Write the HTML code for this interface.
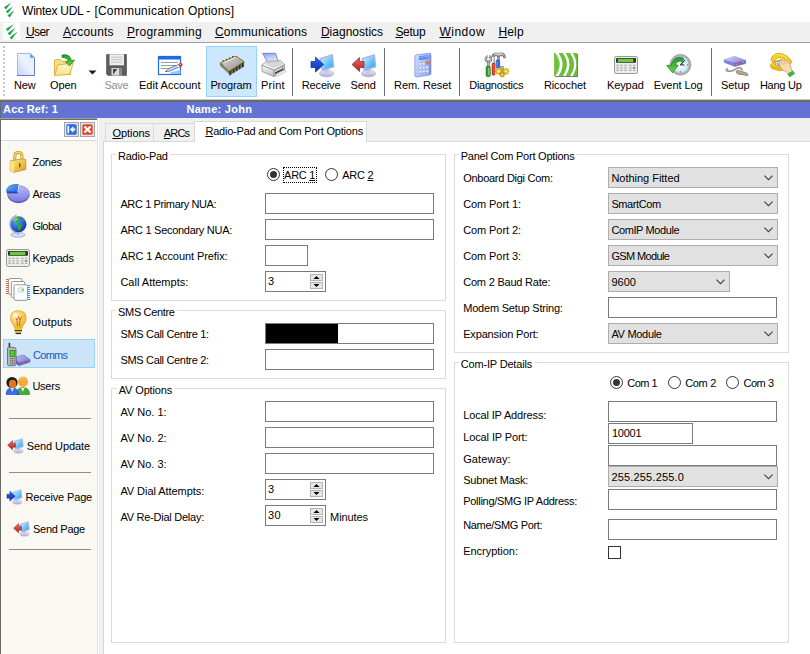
<!DOCTYPE html>
<html>
<head>
<meta charset="utf-8">
<title>Wintex UDL - [Communication Options]</title>
<style>
html,body{margin:0;padding:0;}
body{width:810px;height:654px;overflow:hidden;background:#f0f0f0;position:relative;font-family:"Liberation Sans",sans-serif;font-size:11px;color:#000;}
.abs,.t,.in,.sel,.gb{position:absolute;}
.t{white-space:nowrap;line-height:13px;height:13px;font-size:11px;}
.t12{font-size:12px;line-height:15px;height:15px;}
.t u{text-decoration:underline;text-underline-offset:1px;text-decoration-thickness:1px;}
.b{font-weight:bold;color:#fff;}
#title{left:0;top:0;width:810px;height:22px;background:#fff;}
#menu{left:0;top:22px;width:810px;height:20px;background:#f0f0f0;}
#tbar{left:0;top:42px;width:810px;height:57px;background:#fff;border-top:1px solid #a0a0a0;box-sizing:border-box;}
.sep{position:absolute;top:48px;width:1px;height:48px;background:#707070;}
#bluebar{left:0;top:102px;width:810px;height:16px;background:#6273d4;border-left:1px solid #6a6a6a;box-sizing:border-box;}
#side{left:0;top:119px;width:97px;height:535px;background:#f9f8f3;border-left:1px solid #6a6a6a;border-top:1px solid #6a6a6a;box-sizing:border-box;}
#sidehead{left:0;top:0;width:96px;height:20px;background:#fff;border-bottom:1px solid #d9d9d9;}
.hr{position:absolute;left:8px;width:82px;height:1px;background:#8c8c8c;}
#panel{left:103px;top:141px;width:707px;height:513px;background:#fff;border-left:1px solid #d9d9d9;border-top:1px solid #d9d9d9;box-sizing:border-box;}
.tab{position:absolute;box-sizing:border-box;border:1px solid #d9d9d9;border-bottom:none;background:#f0f0f0;}
.gb{border:1px solid #dcdcdc;box-sizing:border-box;}
.glb{position:absolute;background:#fff;height:3px;}
.in{box-sizing:border-box;border:1px solid #7a7a7a;background:#fff;}
.sel{box-sizing:border-box;border:1px solid #adadad;background:#e1e1e1;}
.sel svg{position:absolute;right:4px;top:7px;}
.radio{position:absolute;width:13px;height:13px;box-sizing:border-box;border:1px solid #333;border-radius:50%;background:#fff;}
.radio.on::after{content:"";position:absolute;left:2px;top:2px;width:7px;height:7px;border-radius:50%;background:#333;}
</style>
</head>
<body>
<div id="title" class="abs"></div><div id="menu" class="abs"></div>
<div id="tbar" class="abs"></div>
<div class="abs" style="left:206px;top:46px;width:51px;height:51px;background:#cce8ff;border:1px solid #99d1ff;box-sizing:border-box"></div>
<div class="sep" style="left:292px"></div>
<div class="sep" style="left:384px"></div>
<div class="sep" style="left:459px"></div>
<div class="sep" style="left:711px"></div>
<div class="abs" style="left:0;top:99px;width:810px;height:1px;background:#c8c8c8"></div><div class="abs" style="left:0;top:100px;width:810px;height:2px;background:#6a6a6a"></div>
<div id="bluebar" class="abs"></div>
<div class="abs" style="left:0;top:118px;width:97px;height:1px;background:#a0a0a0"></div><div class="abs" style="left:97px;top:118px;width:1px;height:536px;background:#e3e3e3"></div><div class="abs" style="left:98px;top:118px;width:1px;height:536px;background:#fff"></div>
<div id="side" class="abs"><div id="sidehead" class="abs"></div><div class="abs" style="left:2px;top:219px;width:92px;height:29px;box-sizing:border-box;background:#cce4f7;border:1px solid #99d1ff"></div><div class="hr" style="top:298px"></div><div class="hr" style="top:352px"></div><div class="hr" style="top:429px"></div></div>
<div id="panel" class="abs"></div>
<div class="tab" style="left:105px;top:123px;width:49px;height:18px"></div>
<div class="tab" style="left:153px;top:123px;width:42px;height:18px"></div>
<div class="tab" style="left:194px;top:121px;width:173px;height:21px;background:#fff"></div>
<div class="gb" style="left:111px;top:154px;width:335px;height:147px"></div><div class="glb" style="left:116px;top:153px;width:54px"></div>
<div class="gb" style="left:111px;top:310px;width:335px;height:69px"></div><div class="glb" style="left:116px;top:309px;width:61px"></div>
<div class="gb" style="left:111px;top:388px;width:335px;height:255px"></div><div class="glb" style="left:117px;top:387px;width:58px"></div>
<div class="gb" style="left:454px;top:154px;width:335px;height:199px"></div><div class="glb" style="left:459px;top:153px;width:118px"></div>
<div class="gb" style="left:454px;top:362px;width:335px;height:281px"></div><div class="glb" style="left:459px;top:361px;width:76px"></div>
<div class="radio on" style="left:267px;top:168px"></div>
<div class="radio" style="left:325px;top:168px"></div>
<div class="abs" style="left:283px;top:167px;width:34px;height:16px;box-sizing:border-box;border:1px dotted #000"></div>
<div class="in" style="left:265px;top:193px;width:169px;height:21px"></div>
<div class="in" style="left:265px;top:219px;width:169px;height:21px"></div>
<div class="in" style="left:265px;top:245px;width:43px;height:21px"></div>
<div class="in" style="left:265px;top:271px;width:61px;height:21px"></div>
<svg class="abs" style="left:310px;top:274px" width="13" height="15" viewBox="0 0 13 15"><rect x="0.5" y="0.5" width="12" height="6" fill="#e6e6e6" stroke="#b4b4b4"/><rect x="0.5" y="8.5" width="12" height="6" fill="#e6e6e6" stroke="#b4b4b4"/><path d="M3.5 5 L6.5 2 L9.5 5 Z" fill="#000"/><path d="M3.5 10 L6.5 13 L9.5 10 Z" fill="#000"/></svg>
<div class="in" style="left:265px;top:323px;width:169px;height:21px"></div>
<div class="abs" style="left:266px;top:324px;width:72px;height:19px;background:#000"></div>
<div class="in" style="left:265px;top:349px;width:169px;height:21px"></div>
<div class="in" style="left:265px;top:401px;width:169px;height:21px"></div>
<div class="in" style="left:265px;top:427px;width:169px;height:21px"></div>
<div class="in" style="left:265px;top:453px;width:169px;height:21px"></div>
<div class="in" style="left:265px;top:479px;width:61px;height:21px"></div>
<svg class="abs" style="left:310px;top:482px" width="13" height="15" viewBox="0 0 13 15"><rect x="0.5" y="0.5" width="12" height="6" fill="#e6e6e6" stroke="#b4b4b4"/><rect x="0.5" y="8.5" width="12" height="6" fill="#e6e6e6" stroke="#b4b4b4"/><path d="M3.5 5 L6.5 2 L9.5 5 Z" fill="#000"/><path d="M3.5 10 L6.5 13 L9.5 10 Z" fill="#000"/></svg>
<div class="in" style="left:265px;top:505px;width:61px;height:21px"></div>
<svg class="abs" style="left:310px;top:508px" width="13" height="15" viewBox="0 0 13 15"><rect x="0.5" y="0.5" width="12" height="6" fill="#e6e6e6" stroke="#b4b4b4"/><rect x="0.5" y="8.5" width="12" height="6" fill="#e6e6e6" stroke="#b4b4b4"/><path d="M3.5 5 L6.5 2 L9.5 5 Z" fill="#000"/><path d="M3.5 10 L6.5 13 L9.5 10 Z" fill="#000"/></svg>
<div class="sel" style="left:608px;top:167px;width:170px;height:21px"><svg width="9" height="6" viewBox="0 0 9 6"><path d="M0.4 0.6 L4.5 4.7 L8.6 0.6" fill="none" stroke="#404040" stroke-width="1.1"/></svg></div>
<div class="sel" style="left:608px;top:193px;width:170px;height:21px"><svg width="9" height="6" viewBox="0 0 9 6"><path d="M0.4 0.6 L4.5 4.7 L8.6 0.6" fill="none" stroke="#404040" stroke-width="1.1"/></svg></div>
<div class="sel" style="left:608px;top:219px;width:170px;height:21px"><svg width="9" height="6" viewBox="0 0 9 6"><path d="M0.4 0.6 L4.5 4.7 L8.6 0.6" fill="none" stroke="#404040" stroke-width="1.1"/></svg></div>
<div class="sel" style="left:608px;top:245px;width:170px;height:21px"><svg width="9" height="6" viewBox="0 0 9 6"><path d="M0.4 0.6 L4.5 4.7 L8.6 0.6" fill="none" stroke="#404040" stroke-width="1.1"/></svg></div>
<div class="sel" style="left:608px;top:323px;width:170px;height:21px"><svg width="9" height="6" viewBox="0 0 9 6"><path d="M0.4 0.6 L4.5 4.7 L8.6 0.6" fill="none" stroke="#404040" stroke-width="1.1"/></svg></div>
<div class="sel" style="left:608px;top:271px;width:122px;height:21px"><svg width="9" height="6" viewBox="0 0 9 6"><path d="M0.4 0.6 L4.5 4.7 L8.6 0.6" fill="none" stroke="#404040" stroke-width="1.1"/></svg></div>
<div class="in" style="left:608px;top:297px;width:169px;height:21px"></div>
<div class="radio on" style="left:610px;top:376px"></div>
<div class="radio" style="left:668px;top:376px"></div>
<div class="radio" style="left:726px;top:376px"></div>
<div class="in" style="left:608px;top:401px;width:169px;height:21px"></div>
<div class="in" style="left:608px;top:423px;width:85px;height:21px"></div>
<div class="in" style="left:608px;top:445px;width:169px;height:21px"></div>
<div class="sel" style="left:608px;top:466px;width:170px;height:21px"><svg width="9" height="6" viewBox="0 0 9 6"><path d="M0.4 0.6 L4.5 4.7 L8.6 0.6" fill="none" stroke="#404040" stroke-width="1.1"/></svg></div>
<div class="in" style="left:608px;top:489px;width:169px;height:21px"></div>
<div class="in" style="left:608px;top:519px;width:169px;height:21px"></div>
<div class="abs" style="left:608px;top:546px;width:13px;height:13px;box-sizing:border-box;border:1px solid #333;background:#fff"></div>
<svg width="0" height="0" style="position:absolute"><defs>
<linearGradient id="gPage" x1="0" y1="1" x2="1" y2="0"><stop offset="0" stop-color="#c4d4fa"/><stop offset="0.55" stop-color="#eef2fe"/><stop offset="1" stop-color="#dfe9ff"/></linearGradient>
<linearGradient id="gFold" x1="0" y1="0" x2="0" y2="1"><stop offset="0" stop-color="#fff8d0"/><stop offset="1" stop-color="#f9e089"/></linearGradient>
<linearGradient id="gGreen" x1="0" y1="0" x2="0" y2="1"><stop offset="0" stop-color="#1f9a2a"/><stop offset="1" stop-color="#6fd44a"/></linearGradient>
<linearGradient id="gScreen" x1="0" y1="0" x2="1" y2="1"><stop offset="0" stop-color="#d6f1ff"/><stop offset="0.5" stop-color="#6fc8fb"/><stop offset="1" stop-color="#2f9df0"/></linearGradient>
<linearGradient id="gBlueArr" x1="0" y1="0" x2="0" y2="1"><stop offset="0" stop-color="#2a6cf0"/><stop offset="1" stop-color="#0a2fb0"/></linearGradient>
<linearGradient id="gRedArr" x1="0" y1="0" x2="0" y2="1"><stop offset="0" stop-color="#e8706a"/><stop offset="1" stop-color="#b02020"/></linearGradient>
<linearGradient id="gStand" x1="0" y1="0" x2="0" y2="1"><stop offset="0" stop-color="#f2f2fb"/><stop offset="1" stop-color="#a9a9d6"/></linearGradient>
<linearGradient id="gCalc" x1="0" y1="0" x2="1" y2="0.6"><stop offset="0" stop-color="#d4e0fd"/><stop offset="0.5" stop-color="#b4c6f7"/><stop offset="1" stop-color="#94acf0"/></linearGradient>
<linearGradient id="gChip" x1="0" y1="0" x2="1" y2="1"><stop offset="0" stop-color="#d6d6d6"/><stop offset="1" stop-color="#909090"/></linearGradient>
<linearGradient id="gPrn" x1="0" y1="0" x2="0" y2="1"><stop offset="0" stop-color="#fafafa"/><stop offset="1" stop-color="#bdbdbd"/></linearGradient>
<linearGradient id="gPaper" x1="0" y1="0" x2="1" y2="1"><stop offset="0" stop-color="#8fa8f5"/><stop offset="1" stop-color="#e8eeff"/></linearGradient>
<linearGradient id="gPaper2" x1="0" y1="0" x2="0.3" y2="1"><stop offset="0" stop-color="#8a9fee"/><stop offset="0.6" stop-color="#c9d6fb"/><stop offset="1" stop-color="#eef2ff"/></linearGradient>
<linearGradient id="gModemTop" x1="0" y1="0" x2="1" y2="0.4"><stop offset="0" stop-color="#e4e4fc"/><stop offset="0.5" stop-color="#b4b4f2"/><stop offset="1" stop-color="#8c8ce2"/></linearGradient>
<linearGradient id="gModem" x1="0" y1="0" x2="1" y2="1"><stop offset="0" stop-color="#b9b9f6"/><stop offset="1" stop-color="#6f6fd6"/></linearGradient>
<radialGradient id="gClock" cx="0.5" cy="0.5" r="0.5"><stop offset="0" stop-color="#ffffff"/><stop offset="1" stop-color="#bfe6f7"/></radialGradient>
<radialGradient id="gGlobe" cx="0.35" cy="0.3" r="0.8"><stop offset="0" stop-color="#5aa8ff"/><stop offset="1" stop-color="#0a2a9a"/></radialGradient>
<radialGradient id="gBulb" cx="0.4" cy="0.35" r="0.7"><stop offset="0" stop-color="#fff6b0"/><stop offset="1" stop-color="#f0a818"/></radialGradient>
<linearGradient id="gLock" x1="0" y1="0" x2="1" y2="1"><stop offset="0" stop-color="#ffe98a"/><stop offset="1" stop-color="#d9a11a"/></linearGradient>
<linearGradient id="gPie" x1="0" y1="0" x2="0" y2="1"><stop offset="0" stop-color="#b8b8f8"/><stop offset="1" stop-color="#7d7de0"/></linearGradient>
<linearGradient id="gPie2" x1="0" y1="0" x2="1" y2="1"><stop offset="0" stop-color="#6fb4ff"/><stop offset="1" stop-color="#1e62d6"/></linearGradient>
</defs></svg>
<svg class="abs" style="left:0px;top:0px" width="22" height="22" viewBox="0 0 22 22"><path d="M6.0 9.4 L11.2 2.6 L4.0 7.2 Z" fill="#1fa64a"/><path d="M7.8 13.5 L12.8 6.6 L5.8 11.3 Z" fill="#1fa64a"/><path d="M9.7 17.6 L14.2 10.3 L7.5 15.6 Z" fill="#1fa64a"/></svg>
<div class="abs" style="left:3px;top:23px;width:17px;height:17px;background:#fff"></div>
<svg class="abs" style="left:0px;top:22px" width="22" height="20" viewBox="0 0 22 20"><path d="M7.8 9.3 L13.8 2.0 L5.8 7.1 Z" fill="#1fa64a"/><path d="M9.6 13.4 L15.6 5.6 L7.6 11.2 Z" fill="#1fa64a"/><path d="M11.7 17.6 L17.5 9.4 L9.5 15.6 Z" fill="#1fa64a"/></svg>
<svg class="abs" style="left:3px;top:46px" width="2" height="52" viewBox="0 0 2 52"><rect x="0" y="0" width="2" height="2" fill="#c8c8c8"/><rect x="0" y="4" width="2" height="2" fill="#c8c8c8"/><rect x="0" y="8" width="2" height="2" fill="#c8c8c8"/><rect x="0" y="12" width="2" height="2" fill="#c8c8c8"/><rect x="0" y="16" width="2" height="2" fill="#c8c8c8"/><rect x="0" y="20" width="2" height="2" fill="#c8c8c8"/><rect x="0" y="24" width="2" height="2" fill="#c8c8c8"/><rect x="0" y="28" width="2" height="2" fill="#c8c8c8"/><rect x="0" y="32" width="2" height="2" fill="#c8c8c8"/><rect x="0" y="36" width="2" height="2" fill="#c8c8c8"/><rect x="0" y="40" width="2" height="2" fill="#c8c8c8"/><rect x="0" y="44" width="2" height="2" fill="#c8c8c8"/><rect x="0" y="48" width="2" height="2" fill="#c8c8c8"/></svg>
<svg class="abs" style="left:14px;top:52px" width="24" height="25" viewBox="0 0 24 25"><path d="M3.5 1.5 H16.5 L20.5 5.5 V23.5 H3.5 Z" fill="url(#gPage)" stroke="#a9b7e8" stroke-width="1"/><path d="M3 23.5 H20.5 V5.8" fill="none" stroke="#6c7ab6" stroke-width="1"/><path d="M16.3 1.8 V5.7 H20.2 Z" fill="#4a94f8"/></svg>
<svg class="abs" style="left:52px;top:52px" width="24" height="25" viewBox="0 0 24 25"><path d="M2.5 9.5 Q2.5 7.6 4 7.6 L8.5 7.6 L10 9.3 L17 9.3 Q18.5 9.3 18.5 11 L18.5 22.5 L2.5 22.5 Z" fill="#f8df86" stroke="#dcae34" stroke-width="0.9"/><path d="M5.8 13 L21.3 10.8 Q19.5 17 17.5 22.3 L2.6 23.6 Z" fill="url(#gFold)" stroke="#dcae34" stroke-width="0.9"/><path d="M10 3 Q18 1.5 19.5 8.5 L22.5 8 L17.5 14 L13.5 9.8 L16.3 9.2 Q15.5 5.5 10 5.5 Z" fill="url(#gGreen)" stroke="#14801e" stroke-width="0.7"/></svg>
<svg class="abs" style="left:88px;top:70px" width="9" height="5" viewBox="0 0 9 5"><path d="M0.5 0.5 H8.5 L4.5 4.5 Z" fill="#1a1a1a"/></svg>
<svg class="abs" style="left:104px;top:52px" width="24" height="25" viewBox="0 0 24 25"><path d="M2.5 2.5 H22.5 V23.5 H4 L2.5 22 Z" fill="#5c5c5c" stroke="#4a4a4a" stroke-width="0.6"/><rect x="5.5" y="2.3" width="14.5" height="11" fill="#eeeeee"/><path d="M7 5.2 H18.5 M7 7.7 H18.5 M7 10.2 H18.5" stroke="#c4c4c4" stroke-width="1"/><rect x="7.5" y="16" width="10.5" height="7.5" fill="#d9d9d9"/><path d="M9 17 H13.5 L9 22.5 Z" fill="#4a4a4a"/><rect x="15" y="16" width="3" height="7.5" fill="#8a8a8a"/></svg>
<svg class="abs" style="left:156px;top:52px" width="28" height="25" viewBox="0 0 28 25"><rect x="2.5" y="4.5" width="22" height="18" fill="#fff" stroke="#1c6be0" stroke-width="1.2"/><rect x="2.5" y="4.5" width="22" height="3" fill="#1c6be0"/><path d="M5 10.5 H22 M5 13.5 H20 M5 16.5 H14" stroke="#9a9a9a" stroke-width="1"/><path d="M15 20 L24.5 18 L24.5 22 H14 Z" fill="#9cc6f8"/><path d="M9.5 19.5 L12 17 L22.7 12.4 L23.8 14.6 L13.1 19.4 Z" fill="#d4e4ff" stroke="#2a62d0" stroke-width="0.8"/><path d="M9.5 19.5 L12 16.8 L13.3 19.6 Z" fill="#e8c24a"/><path d="M9.5 19.5 L10.6 18.3 L11.2 19.5 Z" fill="#333"/><path d="M21.5 12.4 L22.9 15.2" stroke="#fff" stroke-width="1"/><circle cx="24.6" cy="12.8" r="2" fill="#e03a1e"/><circle cx="24.2" cy="12.3" r="0.7" fill="#f7b59a"/></svg>
<svg class="abs" style="left:218px;top:52px" width="28" height="25" viewBox="0 0 28 25"><rect x="4.5" y="8.2" width="1.8" height="2" fill="#6a5c10"/><rect x="7.7" y="6.8" width="1.8" height="2" fill="#6a5c10"/><rect x="10.8" y="5.4" width="1.8" height="2" fill="#6a5c10"/><rect x="14.0" y="4.0" width="1.8" height="2" fill="#6a5c10"/><path d="M11 19.3 L26.2 9.8 L26.2 10.8 L11 20.5 Z" fill="#4a4a4a"/><path d="M11.4 19.0 L13.6 17.8 L13.6 22.2 L11.4 23.4 Z" fill="#2a2a2a" stroke="#5a4e10" stroke-width="0.35"/><path d="M14.5 17.1 L16.7 15.8 L16.7 20.3 L14.5 21.4 Z" fill="#2a2a2a" stroke="#5a4e10" stroke-width="0.35"/><path d="M17.5 15.2 L19.7 14.0 L19.7 18.4 L17.5 19.6 Z" fill="#2a2a2a" stroke="#5a4e10" stroke-width="0.35"/><path d="M20.5 13.3 L22.7 12.1 L22.7 16.6 L20.5 17.7 Z" fill="#2a2a2a" stroke="#5a4e10" stroke-width="0.35"/><path d="M23.6 11.3 L25.8 10.2 L25.8 14.7 L23.6 15.8 Z" fill="#2a2a2a" stroke="#5a4e10" stroke-width="0.35"/><path d="M2.3 11.2 L11 19.3 L11 21.5 L2.5 13.6 Z" fill="#8c8c8c" stroke="#6a5c10" stroke-width="0.7"/><path d="M2.3 11.2 L16.5 4.7 Q18 3.8000000000000003 19.4 5.0 L26.2 9.8 L11 19.3 Z" fill="url(#gChip)" stroke="#7a6a10" stroke-width="0.9"/><path d="M5 11 L17.5 5.6" stroke="#ececec" stroke-width="1.1"/><path d="M3.4 11.5 Q5.4 12 5 13.6" fill="none" stroke="#777" stroke-width="0.8"/></svg>
<svg class="abs" style="left:260px;top:52px" width="27" height="26" viewBox="0 0 27 26"><path d="M2.6 1.3 L15.6 1.3 Q16.8 6 18.8 10.8 L7.6 11.4 Q5.6 6 2.6 1.3 Z" fill="url(#gPaper2)" stroke="#5f74cc" stroke-width="0.8"/><path d="M1.8 13.2 L6.5 9.3 L21 8.7 L24.4 12.8 L14 18.2 Z" fill="#f3f3f3" stroke="#8f8f8f" stroke-width="0.8"/><path d="M6.2 11.6 L8.5 10.2 L19.5 9.8 L21.2 12 L13.5 15.6 Z" fill="#dadada" stroke="#a8a8a8" stroke-width="0.5"/><path d="M1.8 13.2 L14 18.2 L14 24.6 L2.2 19.6 Z" fill="url(#gPrn)" stroke="#8f8f8f" stroke-width="0.8"/><path d="M14 18.2 L24.4 12.8 L24.6 19 L14 24.6 Z" fill="#c9c9c9" stroke="#8f8f8f" stroke-width="0.8"/><path d="M15 20.6 L23.6 16.2 L23.6 17.8 L15 22.3 Z" fill="#3a3a3a"/><path d="M15.6 22.6 L24.6 18 L26.2 19.4 L17.4 24.2 Z" fill="#f6f6f6" stroke="#9a9a9a" stroke-width="0.5"/><circle cx="22.6" cy="15" r="0.8" fill="#3cc83c"/></svg>
<svg class="abs" style="left:310px;top:52px" width="25" height="26" viewBox="0 0 25 26"><g transform="translate(1,1)"><ellipse cx="15.5" cy="20.5" rx="7" ry="3.3" fill="url(#gStand)" stroke="#9a9ac8" stroke-width="0.6"/><path d="M12.5 15 L17.5 14 L18 20 L13 20.5 Z" fill="#c9c9ea"/><path d="M9 5.5 L21.5 1.5 L23 14 L11 17.5 Z" fill="#b9bfe8" stroke="#8d93c8" stroke-width="0.6"/><path d="M10.3 6.3 L20.7 3 L22 13.2 L12 16.2 Z" fill="url(#gScreen)"/></g><path d="M1 9.5 L5.5 9.5 L5.5 5 L13.5 12.5 L5.5 20 L5.5 15.5 L1 15.5 Z" fill="url(#gBlueArr)" stroke="#0a2a9a" stroke-width="0.7"/></svg>
<svg class="abs" style="left:351px;top:52px" width="26" height="26" viewBox="0 0 26 26"><g transform="translate(2,1)"><ellipse cx="15.5" cy="20.5" rx="7" ry="3.3" fill="url(#gStand)" stroke="#9a9ac8" stroke-width="0.6"/><path d="M12.5 15 L17.5 14 L18 20 L13 20.5 Z" fill="#c9c9ea"/><path d="M9 5.5 L21.5 1.5 L23 14 L11 17.5 Z" fill="#b9bfe8" stroke="#8d93c8" stroke-width="0.6"/><path d="M10.3 6.3 L20.7 3 L22 13.2 L12 16.2 Z" fill="url(#gScreen)"/></g><path d="M1 12.5 L8.5 5.5 L8.5 9.5 L13 9.5 L13 15.5 L8.5 15.5 L8.5 19.5 Z" fill="url(#gRedArr)" stroke="#9a1c1c" stroke-width="0.7"/></svg>
<svg class="abs" style="left:412px;top:52px" width="22" height="26" viewBox="0 0 22 26"><path d="M4.2 2.9 L17 1.3 Q18.8 1.2 18.9 3 L18.9 21.4 Q18.8 22.8 17.3 23.1 L4.6 25 Q3 25 2.9 23.5 L2.9 4.3 Q3 3 4.2 2.9 Z" fill="url(#gCalc)" stroke="#7d93e2" stroke-width="0.8"/><path d="M17.4 1.6 Q18.6 1.6 18.6 3 L18.6 21.4 Q18.5 22.5 17.3 22.8 Z" fill="#6f86d8"/><path d="M6.8 4.9 Q6.8 4.2 7.6 4.1 L15.6 3.3 Q16.5 3.3 16.5 4 L16.5 6.4 Q16.5 7.1 15.7 7.2 L7.6 8 Q6.8 8 6.8 7.3 Z" fill="#5c88f0"/><path d="M7 5 L16.3 4 L16.3 4.9 L7 5.9 Z" fill="#8eb0fa"/><circle cx="8.3" cy="11.90" r="1.5" fill="#e4ecff" stroke="#8ea6ee" stroke-width="0.5"/><circle cx="11.8" cy="11.65" r="1.5" fill="#e4ecff" stroke="#8ea6ee" stroke-width="0.5"/><circle cx="8.3" cy="15.70" r="1.5" fill="#e4ecff" stroke="#8ea6ee" stroke-width="0.5"/><circle cx="11.8" cy="15.45" r="1.5" fill="#e4ecff" stroke="#8ea6ee" stroke-width="0.5"/><circle cx="15.2" cy="15.20" r="1.5" fill="#e4ecff" stroke="#8ea6ee" stroke-width="0.5"/><circle cx="8.3" cy="19.60" r="1.5" fill="#e4ecff" stroke="#8ea6ee" stroke-width="0.5"/><circle cx="11.8" cy="19.35" r="1.5" fill="#e4ecff" stroke="#8ea6ee" stroke-width="0.5"/><circle cx="15.2" cy="19.10" r="1.5" fill="#e4ecff" stroke="#8ea6ee" stroke-width="0.5"/><circle cx="15.3" cy="10.8" r="1.7" fill="#f0843c" stroke="#c85a1a" stroke-width="0.4"/></svg>
<svg class="abs" style="left:484px;top:52px" width="27" height="26" viewBox="0 0 27 26"><path d="M8.3 2.6 L10.4 1.3 L18 1 Q20.8 1.3 21.2 4 L21.2 5.8 L19.7 5.8 L19.4 3.9 L15.6 3.7 L15.6 4.6 L13.4 4.6 L13.4 3.7 L10.3 3.9 L8.3 4.5 Z" fill="#b8b8b8" stroke="#4a4a4a" stroke-width="0.7"/><path d="M10.5 2 L18 1.8" stroke="#efefef" stroke-width="0.8"/><rect x="13.6" y="4.4" width="1.9" height="4" fill="#9a9a9a" stroke="#555" stroke-width="0.4"/><rect x="12" y="8.1" width="3.7" height="8" rx="1" fill="#2a66dc" stroke="#173c9a" stroke-width="0.5"/><path d="M13 9 V15.4" stroke="#7fa8f5" stroke-width="0.9"/><rect x="9.7" y="2.4" width="0.9" height="9" fill="#777"/><rect x="8.1" y="11" width="2.9" height="12.2" rx="1.2" fill="#e22a1a" stroke="#8a1410" stroke-width="0.5"/><path d="M9.9 12 V22" stroke="#f7824a" stroke-width="0.9"/><circle cx="4.4" cy="7.1" r="2.7" fill="none" stroke="#4a4a4a" stroke-width="2.2"/><circle cx="4.4" cy="7.1" r="2.7" fill="none" stroke="#c4c4c4" stroke-width="1.3"/><path d="M3.5 3 L4.4 6.2 L5.3 3 Z" fill="#fff"/><rect x="3.4" y="9.8" width="2.1" height="5" fill="#bdbdbd" stroke="#555" stroke-width="0.5"/><rect x="2.1" y="14.3" width="4.2" height="10.3" rx="1.3" fill="#22a222" stroke="#116411" stroke-width="0.6"/><path d="M4.9 15.5 V23.4" stroke="#a8eaa8" stroke-width="1"/><rect x="16.8" y="14.3" width="2.4" height="5" fill="#b4b4b4" stroke="#666" stroke-width="0.5"/><polygon points="18.40,19.30 16.73,20.14 17.32,21.92 15.54,21.33 14.70,23.00 13.86,21.33 12.08,21.92 12.67,20.14 11.00,19.30 12.67,18.46 12.08,16.68 13.86,17.27 14.70,15.60 15.54,17.27 17.32,16.68 16.73,18.46" fill="#f4d21a" stroke="#a8860a" stroke-width="0.5"/><circle cx="14.7" cy="19.3" r="0.99" fill="#fffbd0"/><polygon points="25.40,19.30 23.74,20.10 24.35,21.85 22.60,21.24 21.80,22.90 21.00,21.24 19.25,21.85 19.86,20.10 18.20,19.30 19.86,18.50 19.25,16.75 21.00,17.36 21.80,15.70 22.60,17.36 24.35,16.75 23.74,18.50" fill="#f4d21a" stroke="#a8860a" stroke-width="0.5"/><circle cx="21.8" cy="19.3" r="0.95" fill="#fffbd0"/><polygon points="21.00,22.60 19.68,23.21 20.18,24.58 18.81,24.08 18.20,25.40 17.59,24.08 16.22,24.58 16.72,23.21 15.40,22.60 16.72,21.99 16.22,20.62 17.59,21.12 18.20,19.80 18.81,21.12 20.18,20.62 19.68,21.99" fill="#e8bc10" stroke="#8a6c08" stroke-width="0.5"/><circle cx="18.2" cy="22.6" r="0.72" fill="#fffbd0"/></svg>
<svg class="abs" style="left:554px;top:52px" width="25" height="26" viewBox="0 0 25 26"><rect x="1" y="2" width="23" height="23" fill="#7a7a80"/><rect x="0" y="1" width="23" height="23" fill="#6dbf3a"/><clipPath id="cr"><rect x="0" y="1" width="23" height="23"/></clipPath><g clip-path="url(#cr)" fill="none" stroke="#ffffff"><path d="M2.1 0 Q12.1 12.5 2.1 25" stroke-width="2.7"/><path d="M9.6 0 Q18.8 12.5 9.6 25" stroke-width="2.5"/><path d="M16.7 0 Q25.7 12.5 16.7 25" stroke-width="2.3"/><ellipse cx="2.6" cy="12.5" rx="2.4" ry="8" stroke="#9ad870" stroke-width="0.5"/></g></svg>
<svg class="abs" style="left:614px;top:56px" width="24" height="18" viewBox="0 0 24 18"><rect x="0.5" y="0.5" width="23" height="17" rx="1.8" fill="#ededed" stroke="#979797"/><rect x="2" y="2" width="20" height="4.7" rx="0.9" fill="#2a2e2a"/><rect x="3.8" y="2.7" width="15.6" height="3.2" rx="0.5" fill="#68cc34"/><rect x="2.3" y="8.7" width="2.6" height="1.4" fill="#b4b4b4"/><rect x="6.2" y="8.7" width="2.6" height="1.4" fill="#b4b4b4"/><rect x="10.2" y="8.7" width="2.6" height="1.4" fill="#b4b4b4"/><rect x="14.9" y="8.7" width="2.6" height="1.4" fill="#b4b4b4"/><rect x="18.8" y="8.7" width="2.6" height="1.4" fill="#b4b4b4"/><rect x="2.3" y="11.2" width="2.6" height="1.4" fill="#b4b4b4"/><rect x="6.2" y="11.2" width="2.6" height="1.4" fill="#b4b4b4"/><rect x="10.2" y="11.2" width="2.6" height="1.4" fill="#b4b4b4"/><rect x="14.9" y="11.2" width="2.6" height="1.4" fill="#b4b4b4"/><rect x="18.8" y="11.2" width="2.6" height="1.4" fill="#6e6e6e"/><rect x="2.3" y="13.6" width="2.6" height="1.4" fill="#b4b4b4"/><rect x="6.2" y="13.6" width="2.6" height="1.4" fill="#b4b4b4"/><rect x="10.2" y="13.6" width="2.6" height="1.4" fill="#b4b4b4"/><rect x="14.9" y="13.6" width="2.6" height="1.4" fill="#b4b4b4"/><rect x="18.8" y="13.6" width="2.6" height="1.4" fill="#b4b4b4"/></svg>
<svg class="abs" style="left:666px;top:53px" width="27" height="24" viewBox="0 0 27 24"><circle cx="14.5" cy="11.8" r="10.3" fill="#b4b4b8" stroke="#8c8c90" stroke-width="0.8"/><circle cx="14.5" cy="11.8" r="8.4" fill="url(#gClock)" stroke="#9ab" stroke-width="0.5"/><path d="M14.4 11.9 L18.8 7.2" stroke="#333" stroke-width="1.2"/><path d="M14.4 11.9 L18.5 12" stroke="#333" stroke-width="1.1"/><circle cx="21.6" cy="12" r="0.8" fill="#f05030"/><circle cx="14.4" cy="19" r="0.8" fill="#f05030"/><path d="M17.8 5.4 Q8.2 1.2 5 12.2 L0.6 12.4 L6.6 19.8 L12.2 12.1 L9.2 12.1 Q10.5 7.2 16.4 8.4 Z" fill="url(#gGreen)" stroke="#14801e" stroke-width="0.7"/></svg>
<svg class="abs" style="left:722px;top:54px" width="28" height="23" viewBox="0 0 28 23"><path d="M6.2 14.6 Q3.2 15.4 4.8 16.8 Q8 18 12 16 Q16.8 12.8 19.3 14.3 Q20.2 15 20.2 16.5" fill="none" stroke="#8e8e8e" stroke-width="1.5"/><path d="M2.1 5.9 L12.8 8.8 L12.8 12.4 L2.3 8.4 Z" fill="#8484da" stroke="#6464c4" stroke-width="0.5"/><path d="M12.8 8.8 L23.6 6.3 L23.6 9.6 L12.8 12.4 Z" fill="#6c6ccc" stroke="#5c5cbc" stroke-width="0.5"/><path d="M2.1 5.9 L12.3 2.4 L23.6 6.3 L12.8 8.8 Z" fill="url(#gModemTop)" stroke="#7c7cd4" stroke-width="0.5"/><path d="M13.8 9.6 L18.4 8.5 L18.4 10 L13.8 11.2 Z" fill="#e8503a"/><path d="M13.8 10.4 L16 9.9 L16 10.6 L13.8 11.2 Z" fill="#f2a030"/><circle cx="21.4" cy="8" r="0.9" fill="#4fdc4f"/><path d="M14.2 17 L16.2 16.2 L25 19.2 Q26.4 20.2 25.4 21.6 L15.6 19.9 Q13.8 18.9 14.2 17 Z" fill="#a8a8b0" stroke="#5a5a5a" stroke-width="0.6"/><path d="M16.8 17.6 L23.6 19.8 L23.2 20.8 L16.4 18.8 Z" fill="#f0a820"/></svg>
<svg class="abs" style="left:768px;top:52px" width="28" height="26" viewBox="0 0 28 26"><path d="M2.2 13.4 L5.5 9.8 L13.5 7.5 L21 12 L20 17 L11.5 18.8 L4 16.6 Z" fill="#f4c81a" stroke="#c79a10" stroke-width="0.8"/><path d="M2.4 14.5 L11.5 17 L20.5 14.6" fill="none" stroke="#d9a814" stroke-width="0.9"/><ellipse cx="10.8" cy="11.8" rx="3.8" ry="2.4" fill="#ececec" stroke="#8a8a8a" stroke-width="0.7" transform="rotate(12 10.8 11.8)"/><path d="M8.8 11.2 L10.2 11.7 M11.2 11.6 L12.8 12.2 M9.3 12.6 L11 13.1" stroke="#777" stroke-width="0.9"/><path d="M3.2 8.6 Q2.6 5.5 5.2 3.6 Q8 1 11.5 1.3 Q17 1.8 21 6 Q24 8.8 23.6 10.6 Q23.2 12 21.4 11.6 Q19.5 11 18.8 8.8 Q15.5 5.6 11.5 5.4 Q8.2 5.3 7.6 7.6 Q7.4 9.6 5.4 9.8 Q3.6 9.8 3.2 8.6 Z" fill="#f6d024" stroke="#c79a10" stroke-width="0.8"/><path d="M5.8 4.2 Q8.5 2.2 12 2.6 Q16.5 3.2 20 6.6" fill="none" stroke="#fbe56a" stroke-width="1"/><path d="M11.2 9.6 Q12.8 7.6 15.2 8 Q17.6 7 19.6 8.6 Q21.6 9.4 22 12 L23 16.6 L24.4 19.2 L20.4 22 L18 19.4 Q14.6 19 12.8 16 Q11 13.6 11.2 9.6 Z" fill="#f9dcae" stroke="#b98d55" stroke-width="0.7"/><path d="M13.4 10 L15 12.8 M15.6 8.8 L17.4 12 M18 8.6 L19.6 11.6" stroke="#c59a60" stroke-width="0.7"/><path d="M19.8 22 L25 19.2 L26.6 21.6 L21.8 24.8 Z" fill="#3cbc3c" stroke="#1f8a1f" stroke-width="0.6"/></svg>
<svg class="abs" style="left:64px;top:122px" width="15" height="15" viewBox="0 0 15 15"><rect x="0.5" y="0.5" width="14" height="14" fill="#e4e4e4" stroke="#a4a4a4"/><rect x="2.3" y="2.3" width="10.4" height="10.4" rx="1.5" fill="#2a6ae8"/><path d="M4.3 3.8 V11.2" stroke="#fff" stroke-width="1.7"/><path d="M5.8 7.5 L9.4 4.2 V6.4 H11.3 V8.6 H9.4 V10.8 Z" fill="#fff"/></svg>
<svg class="abs" style="left:80px;top:122px" width="15" height="15" viewBox="0 0 15 15"><rect x="0.5" y="0.5" width="14" height="14" fill="#e4e4e4" stroke="#a4a4a4"/><rect x="2.3" y="2.3" width="10.4" height="10.4" rx="1.5" fill="#e0482a"/><path d="M4.4 4.4 L10.6 10.6 M10.6 4.4 L4.4 10.6" stroke="#fff" stroke-width="2.1"/></svg>
<svg class="abs" style="left:8px;top:150px" width="20" height="24" viewBox="0 0 20 24"><path d="M6.8 11 V6.4 Q6.8 2.4 10.4 2.4 Q14 2.4 14 6.4 V10" fill="none" stroke="#c9971a" stroke-width="2.9"/><path d="M6.8 11 V6.4 Q6.8 2.4 10.4 2.4 Q14 2.4 14 6.4 V10" fill="none" stroke="#f8dc6c" stroke-width="1.4"/><path d="M2.3 10.8 L14.5 8.8 L17.8 9.6 L17.8 19.5 L6 22.3 L2.3 21 Z" fill="url(#gLock)" stroke="#b98a14" stroke-width="0.7"/><path d="M2.3 10.8 L6 11.8 L6 22.3 L2.3 21 Z" fill="#fbe48a"/><path d="M11.8 12.5 L12.6 15 L11.8 18.5 L11 15 Z" fill="#4a3a10"/></svg>
<svg class="abs" style="left:5px;top:183px" width="26" height="22" viewBox="0 0 26 22"><ellipse cx="13.5" cy="12.2" rx="11" ry="8" fill="#5a5ac4"/><ellipse cx="13.5" cy="10.6" rx="11" ry="8" fill="url(#gPie)" stroke="#6a6ad2" stroke-width="0.5"/><path d="M12.5 9 L1.6 8.6 Q1.5 3.6 7 2 Q10.5 1 13.5 1.5 Z" fill="url(#gPie2)" stroke="#1a52c0" stroke-width="0.6"/><path d="M1.6 8.6 L12.5 9 L12.5 10.6 L1.8 10.3 Z" fill="#1a4ab0"/><path d="M13.8 1.8 L12.9 9" stroke="#f4f4ff" stroke-width="0.8"/></svg>
<svg class="abs" style="left:8px;top:213px" width="22" height="25" viewBox="0 0 22 25"><ellipse cx="10" cy="21.8" rx="7" ry="2.4" fill="#dcdcf4" stroke="#9a9ad0" stroke-width="0.7"/><rect x="9" y="18" width="2.2" height="4" fill="#b4b4e0"/><path d="M8.5 2 Q1 6 2.2 13 Q3.2 18.5 9 20" fill="none" stroke="#a8a8dc" stroke-width="1.4"/><circle cx="10.5" cy="11.3" r="8" fill="url(#gGlobe)"/><path d="M6 5.5 Q8 3.8 11 4 Q10.5 6 12 7.5 Q10 8.5 9.5 10.5 Q8 9 6.5 9 Q5.5 7.5 6 5.5 Z" fill="#2fae2a"/><path d="M9.5 11 Q12 10.5 13.5 12 Q14 14 12.5 15.5 Q12 17.5 11 18 Q10 16 10 14 Q8.8 12.5 9.5 11 Z" fill="#2fae2a"/><path d="M14 5 Q16.5 6 17.3 8.5 Q15.8 8.5 15 7.2 Z" fill="#2fae2a"/><ellipse cx="7.5" cy="6.5" rx="2.6" ry="1.6" fill="#fff" opacity="0.35" transform="rotate(-30 7.5 6.5)"/></svg>
<svg class="abs" style="left:6px;top:249px" width="24" height="18" viewBox="0 0 24 18"><rect x="0.5" y="0.5" width="23" height="17" rx="1.8" fill="#ededed" stroke="#979797"/><rect x="2" y="2" width="20" height="4.7" rx="0.9" fill="#2a2e2a"/><rect x="3.8" y="2.7" width="15.6" height="3.2" rx="0.5" fill="#68cc34"/><rect x="2.3" y="8.7" width="2.6" height="1.4" fill="#b4b4b4"/><rect x="6.2" y="8.7" width="2.6" height="1.4" fill="#b4b4b4"/><rect x="10.2" y="8.7" width="2.6" height="1.4" fill="#b4b4b4"/><rect x="14.9" y="8.7" width="2.6" height="1.4" fill="#b4b4b4"/><rect x="18.8" y="8.7" width="2.6" height="1.4" fill="#b4b4b4"/><rect x="2.3" y="11.2" width="2.6" height="1.4" fill="#b4b4b4"/><rect x="6.2" y="11.2" width="2.6" height="1.4" fill="#b4b4b4"/><rect x="10.2" y="11.2" width="2.6" height="1.4" fill="#b4b4b4"/><rect x="14.9" y="11.2" width="2.6" height="1.4" fill="#b4b4b4"/><rect x="18.8" y="11.2" width="2.6" height="1.4" fill="#6e6e6e"/><rect x="2.3" y="13.6" width="2.6" height="1.4" fill="#b4b4b4"/><rect x="6.2" y="13.6" width="2.6" height="1.4" fill="#b4b4b4"/><rect x="10.2" y="13.6" width="2.6" height="1.4" fill="#b4b4b4"/><rect x="14.9" y="13.6" width="2.6" height="1.4" fill="#b4b4b4"/><rect x="18.8" y="13.6" width="2.6" height="1.4" fill="#b4b4b4"/></svg>
<svg class="abs" style="left:6px;top:278px" width="25" height="23" viewBox="0 0 25 23"><rect x="0" y="1" width="2.6" height="1" fill="#f06030"/><rect x="0" y="3" width="2.6" height="1" fill="#f06030"/><rect x="0" y="5" width="2.6" height="1" fill="#f06030"/><rect x="0" y="7" width="2.6" height="1" fill="#f06030"/><rect x="0" y="9" width="2.6" height="1" fill="#f06030"/><rect x="0" y="11" width="2.6" height="1" fill="#f06030"/><rect x="0" y="13" width="2.6" height="1" fill="#f06030"/><rect x="0" y="15" width="2.6" height="1" fill="#f06030"/><rect x="21.5" y="7" width="2.6" height="1" fill="#3a9af0"/><rect x="21.5" y="9" width="2.6" height="1" fill="#3a9af0"/><rect x="21.5" y="11" width="2.6" height="1" fill="#3a9af0"/><rect x="21.5" y="13" width="2.6" height="1" fill="#3a9af0"/><rect x="21.5" y="15" width="2.6" height="1" fill="#3a9af0"/><rect x="21.5" y="17" width="2.6" height="1" fill="#3a9af0"/><rect x="21.5" y="19" width="2.6" height="1" fill="#3a9af0"/><rect x="21.5" y="21" width="2.6" height="1" fill="#3a9af0"/><rect x="2.6" y="0.5" width="13.5" height="16" rx="1.5" fill="#fff" stroke="#8a8a8a" stroke-width="0.9"/><rect x="5.3" y="3.5" width="13.5" height="16" rx="1.5" fill="#fff" stroke="#8a8a8a" stroke-width="0.9"/><rect x="8" y="6.8" width="13.5" height="15.5" rx="1.5" fill="#fff" stroke="#8a8a8a" stroke-width="0.9"/><rect x="12.3" y="10" width="5.2" height="4" rx="0.6" fill="#fff" stroke="#aaa" stroke-width="0.7"/><circle cx="16.3" cy="11.8" r="0.9" fill="#20c820"/></svg>
<svg class="abs" style="left:8px;top:308px" width="21" height="27" viewBox="0 0 21 27"><circle cx="10.3" cy="11" r="10.3" fill="#fff" opacity="0.8"/><path d="M10.3 2.5 Q18.3 2.5 18.3 10.5 Q18.3 14 15.5 17 Q14 19 14 20.5 L6.6 20.5 Q6.6 19 5.1 17 Q2.3 14 2.3 10.5 Q2.3 2.5 10.3 2.5 Z" fill="url(#gBulb)" stroke="#e8a010" stroke-width="0.6"/><path d="M7 9 L9 12 L10.5 8.5 L12 12 L14 8.5 M9 12 L9.5 18 M12 12 L11.5 18" fill="none" stroke="#e04a1a" stroke-width="0.9"/><ellipse cx="7.2" cy="7.5" rx="2.4" ry="3" fill="#fff" opacity="0.6"/><rect x="6.6" y="20.5" width="7.4" height="1.6" fill="#f2c81e"/><rect x="6.6" y="22.1" width="7.4" height="1.3" fill="#2a2a2a"/><rect x="6.9" y="23.4" width="6.8" height="1.4" fill="#f2c81e"/><rect x="7.6" y="24.8" width="5.4" height="1.3" fill="#2a2a2a"/></svg>
<svg class="abs" style="left:6px;top:342px" width="25" height="25" viewBox="0 0 25 25"><path d="M10 15 L17.5 13 L24 17.5 L24 20 L13 23.5 L10 21 Z" fill="url(#gModem)" stroke="#6a6ac8" stroke-width="0.6"/><path d="M10 18.5 L13 20.8 L24 17.5 L24 20 L13 23.5 L10 21 Z" fill="#5c5cc4"/><path d="M14 21.2 L19 19.7 L19 20.8 L14 22.3 Z" fill="#e86a3a"/><circle cx="22" cy="19" r="0.7" fill="#5ae05a"/><rect x="2.6" y="0.8" width="1.6" height="5" fill="#3a3a3a"/><path d="M1.5 6.5 Q1.5 5 3 5 L8.5 5.5 Q10 5.8 10 7.2 L10 22 Q10 23.5 8.5 23.6 L3.2 23.8 Q1.6 23.8 1.5 22.2 Z" fill="#b8b8b8" stroke="#5a5a5a" stroke-width="0.8"/><rect x="4" y="8.5" width="4.8" height="6.2" fill="#4fd02a" stroke="#2a6a1a" stroke-width="0.6"/><path d="M4.2 16.5 H8.6 M4.2 18.3 H8.6 M4.2 20.1 H8.6 M4.2 21.9 H8.6" stroke="#555" stroke-width="0.9" stroke-dasharray="1.1 0.55"/></svg>
<svg class="abs" style="left:5px;top:374px" width="26" height="22" viewBox="0 0 26 22"><path d="M11.5 20.5 Q11.5 13.5 17.8 13.5 Q24.6 13.5 24.6 20.5 Z" fill="#3cae3c" stroke="#1f7a1f" stroke-width="0.6"/><path d="M15.8 13.8 L17.8 17.5 L19.8 13.8 Z" fill="#fff"/><circle cx="18" cy="8" r="5" fill="#f8a83a"/><path d="M13 7.5 Q13.5 2.5 18 2.5 Q22.5 2.5 23 7.5 Q21 5 18 5.2 Q15 5 13 7.5 Z" fill="#e8c060"/><path d="M1.2 20.5 Q1.2 13.8 7.3 13.8 Q13.4 13.8 13.4 20.5 Z" fill="#3a6ee8" stroke="#1a3fb0" stroke-width="0.6"/><path d="M5.5 14 L7.3 18 L9.1 14 Z" fill="#cfe0ff"/><circle cx="7" cy="8.5" r="5.6" fill="#1a1a1a"/><ellipse cx="7.6" cy="10" rx="3.7" ry="4.2" fill="#e8742a"/></svg>
<svg class="abs" style="left:7px;top:437px" width="17" height="17" viewBox="0 0 26 26"><g transform="translate(2,1)"><ellipse cx="15.5" cy="20.5" rx="7" ry="3.3" fill="url(#gStand)" stroke="#9a9ac8" stroke-width="0.6"/><path d="M12.5 15 L17.5 14 L18 20 L13 20.5 Z" fill="#c9c9ea"/><path d="M9 5.5 L21.5 1.5 L23 14 L11 17.5 Z" fill="#b9bfe8" stroke="#8d93c8" stroke-width="0.6"/><path d="M10.3 6.3 L20.7 3 L22 13.2 L12 16.2 Z" fill="url(#gScreen)"/></g><path d="M1 12.5 L8.5 5.5 L8.5 9.5 L13 9.5 L13 15.5 L8.5 15.5 L8.5 19.5 Z" fill="url(#gRedArr)" stroke="#9a1c1c" stroke-width="0.8"/></svg>
<svg class="abs" style="left:6px;top:488px" width="17" height="17" viewBox="0 0 25 26"><g transform="translate(1,1)"><ellipse cx="15.5" cy="20.5" rx="7" ry="3.3" fill="url(#gStand)" stroke="#9a9ac8" stroke-width="0.6"/><path d="M12.5 15 L17.5 14 L18 20 L13 20.5 Z" fill="#c9c9ea"/><path d="M9 5.5 L21.5 1.5 L23 14 L11 17.5 Z" fill="#b9bfe8" stroke="#8d93c8" stroke-width="0.6"/><path d="M10.3 6.3 L20.7 3 L22 13.2 L12 16.2 Z" fill="url(#gScreen)"/></g><path d="M1 9.5 L5.5 9.5 L5.5 5 L13.5 12.5 L5.5 20 L5.5 15.5 L1 15.5 Z" fill="url(#gBlueArr)" stroke="#0a2a9a" stroke-width="0.8"/></svg>
<svg class="abs" style="left:13px;top:520px" width="17" height="17" viewBox="0 0 26 26"><g transform="translate(2,1)"><ellipse cx="15.5" cy="20.5" rx="7" ry="3.3" fill="url(#gStand)" stroke="#9a9ac8" stroke-width="0.6"/><path d="M12.5 15 L17.5 14 L18 20 L13 20.5 Z" fill="#c9c9ea"/><path d="M9 5.5 L21.5 1.5 L23 14 L11 17.5 Z" fill="#b9bfe8" stroke="#8d93c8" stroke-width="0.6"/><path d="M10.3 6.3 L20.7 3 L22 13.2 L12 16.2 Z" fill="url(#gScreen)"/></g><path d="M1 12.5 L8.5 5.5 L8.5 9.5 L13 9.5 L13 15.5 L8.5 15.5 L8.5 19.5 Z" fill="url(#gRedArr)" stroke="#9a1c1c" stroke-width="0.8"/></svg>
<span id="t0" class="t t12" style="left:22.1px;top:4px;letter-spacing:-0.26px;">Wintex UDL -</span>
<span id="t1" class="t t12" style="left:94.4px;top:4px;letter-spacing:0.23px;">[Communication Options]</span>
<span id="t2" class="t t12" style="left:25.9px;top:25px;letter-spacing:-0.55px;"><u>U</u>ser</span>
<span id="t3" class="t t12" style="left:62.9px;top:25px;letter-spacing:0.19px;"><u>A</u>ccounts</span>
<span id="t4" class="t t12" style="left:126.9px;top:25px;letter-spacing:0.27px;"><u>P</u>rogramming</span>
<span id="t5" class="t t12" style="left:214.9px;top:25px;letter-spacing:0.22px;"><u>C</u>ommunications</span>
<span id="t6" class="t t12" style="left:320.9px;top:25px;letter-spacing:0.02px;"><u>D</u>iagnostics</span>
<span id="t7" class="t t12" style="left:395.4px;top:25px;letter-spacing:-0.29px;"><u>S</u>etup</span>
<span id="t8" class="t t12" style="left:439.4px;top:25px;letter-spacing:0.50px;"><u>W</u>indow</span>
<span id="t9" class="t t12" style="left:498.4px;top:25px;letter-spacing:0.17px;"><u>H</u>elp</span>
<span id="t10" class="t " style="left:14.0px;top:79px;letter-spacing:-0.21px;">New</span>
<span id="t11" class="t " style="left:50.0px;top:79px;letter-spacing:-0.11px;">Open</span>
<span id="t12" class="t " style="left:104.4px;top:79px;letter-spacing:-0.29px;color:#8f8f8f">Save</span>
<span id="t13" class="t " style="left:138.9px;top:79px;letter-spacing:0.05px;">Edit Account</span>
<span id="t14" class="t " style="left:210.4px;top:79px;letter-spacing:-0.16px;">Program</span>
<span id="t15" class="t " style="left:261.0px;top:79px;letter-spacing:0.24px;">Print</span>
<span id="t16" class="t " style="left:301.8px;top:79px;letter-spacing:-0.16px;">Receive</span>
<span id="t17" class="t " style="left:350.6px;top:79px;letter-spacing:-0.17px;">Send</span>
<span id="t18" class="t " style="left:394.1px;top:79px;letter-spacing:-0.10px;">Rem. Reset</span>
<span id="t19" class="t " style="left:469.2px;top:79px;letter-spacing:-0.25px;">Diagnostics</span>
<span id="t20" class="t " style="left:543.9px;top:79px;letter-spacing:-0.10px;">Ricochet</span>
<span id="t21" class="t " style="left:606.9px;top:79px;letter-spacing:-0.08px;">Keypad</span>
<span id="t22" class="t " style="left:653.7px;top:79px;letter-spacing:-0.08px;">Event Log</span>
<span id="t23" class="t " style="left:721.0px;top:79px;letter-spacing:-0.04px;">Setup</span>
<span id="t24" class="t " style="left:759.9px;top:79px;letter-spacing:-0.25px;">Hang Up</span>
<span id="t25" class="t b" style="left:3.1px;top:103px;letter-spacing:0.11px;">Acc Ref: 1</span>
<span id="t26" class="t b" style="left:186.4px;top:103px;letter-spacing:0.30px;">Name: John</span>
<span id="t27" class="t " style="left:32.4px;top:156px;letter-spacing:-0.22px;">Zones</span>
<span id="t28" class="t " style="left:32.4px;top:188px;letter-spacing:-0.14px;">Areas</span>
<span id="t29" class="t " style="left:32.4px;top:220px;letter-spacing:-0.52px;">Global</span>
<span id="t30" class="t " style="left:32.4px;top:252px;letter-spacing:-0.20px;">Keypads</span>
<span id="t31" class="t " style="left:32.4px;top:284px;letter-spacing:-0.11px;">Expanders</span>
<span id="t32" class="t " style="left:32.4px;top:316px;letter-spacing:0.19px;">Outputs</span>
<span id="t33" class="t " style="left:33.0px;top:349px;letter-spacing:-0.70px;color:#1e57c8">Comms</span>
<span id="t34" class="t " style="left:32.4px;top:380px;letter-spacing:-0.23px;">Users</span>
<span id="t35" class="t " style="left:26.8px;top:440px;letter-spacing:-0.09px;">Send Update</span>
<span id="t36" class="t " style="left:25.4px;top:491px;letter-spacing:-0.15px;">Receive Page</span>
<span id="t37" class="t " style="left:33.0px;top:523px;letter-spacing:-0.28px;">Send Page</span>
<span id="t38" class="t " style="left:112.4px;top:127px;letter-spacing:-0.04px;"><u>O</u>ptions</span>
<span id="t39" class="t " style="left:163.8px;top:127px;letter-spacing:-0.84px;"><u>A</u>RCs</span>
<span id="t40" class="t " style="left:205.4px;top:125px;letter-spacing:-0.21px;"><u>R</u>adio-Pad and Com Port Options</span>
<span id="t41" class="t " style="left:118.1px;top:150px;letter-spacing:-0.27px;">Radio-Pad</span>
<span id="t42" class="t " style="left:118.1px;top:306px;letter-spacing:-0.35px;">SMS Centre</span>
<span id="t43" class="t " style="left:118.7px;top:384px;letter-spacing:-0.13px;">AV Options</span>
<span id="t44" class="t " style="left:460.7px;top:150px;letter-spacing:-0.22px;">Panel Com Port Options</span>
<span id="t45" class="t " style="left:460.7px;top:358px;letter-spacing:-0.17px;">Com-IP Details</span>
<span id="t46" class="t " style="left:284.1px;top:169px;letter-spacing:-0.30px;">ARC <u>1</u></span>
<span id="t47" class="t " style="left:342.2px;top:169px;letter-spacing:-0.25px;">ARC <u>2</u></span>
<span id="t48" class="t " style="left:627.2px;top:377px;letter-spacing:-0.50px;">Com 1</span>
<span id="t49" class="t " style="left:685.2px;top:377px;letter-spacing:-0.33px;">Com 2</span>
<span id="t50" class="t " style="left:743.4px;top:377px;letter-spacing:-0.43px;">Com 3</span>
<span id="t51" class="t " style="left:120.4px;top:198px;letter-spacing:-0.38px;">ARC 1 Primary NUA:</span>
<span id="t52" class="t " style="left:120.4px;top:224px;letter-spacing:-0.29px;">ARC 1 Secondary NUA:</span>
<span id="t53" class="t " style="left:120.4px;top:250px;letter-spacing:-0.08px;">ARC 1 Account Prefix:</span>
<span id="t54" class="t " style="left:120.4px;top:276px;letter-spacing:-0.00px;">Call Attempts:</span>
<span id="t55" class="t " style="left:120.4px;top:328px;letter-spacing:-0.32px;">SMS Call Centre 1:</span>
<span id="t56" class="t " style="left:120.4px;top:354px;letter-spacing:-0.32px;">SMS Call Centre 2:</span>
<span id="t57" class="t " style="left:120.4px;top:406px;letter-spacing:-0.01px;">AV No. 1:</span>
<span id="t58" class="t " style="left:120.4px;top:432px;letter-spacing:-0.01px;">AV No. 2:</span>
<span id="t59" class="t " style="left:120.4px;top:458px;letter-spacing:-0.01px;">AV No. 3:</span>
<span id="t60" class="t " style="left:120.4px;top:485px;letter-spacing:-0.06px;">AV Dial Attempts:</span>
<span id="t61" class="t " style="left:120.4px;top:511px;letter-spacing:-0.25px;">AV Re-Dial Delay:</span>
<span id="t62" class="t " style="left:330.1px;top:511px;letter-spacing:-0.11px;">Minutes</span>
<span id="t63" class="t " style="left:268.0px;top:275px;">3</span>
<span id="t64" class="t " style="left:268.0px;top:483px;">3</span>
<span id="t65" class="t " style="left:268.0px;top:509px;letter-spacing:0.35px;">30</span>
<span id="t66" class="t " style="left:463.2px;top:172px;letter-spacing:-0.27px;">Onboard Digi Com:</span>
<span id="t67" class="t " style="left:463.2px;top:198px;letter-spacing:-0.09px;">Com Port 1:</span>
<span id="t68" class="t " style="left:463.2px;top:224px;letter-spacing:-0.09px;">Com Port 2:</span>
<span id="t69" class="t " style="left:463.2px;top:250px;letter-spacing:-0.09px;">Com Port 3:</span>
<span id="t70" class="t " style="left:463.2px;top:276px;letter-spacing:-0.21px;">Com 2 Baud Rate:</span>
<span id="t71" class="t " style="left:463.2px;top:302px;letter-spacing:-0.20px;">Modem Setup String:</span>
<span id="t72" class="t " style="left:463.2px;top:328px;letter-spacing:-0.16px;">Expansion Port:</span>
<span id="t73" class="t " style="left:463.2px;top:409px;letter-spacing:-0.14px;">Local IP Address:</span>
<span id="t74" class="t " style="left:463.2px;top:431px;letter-spacing:-0.11px;">Local IP Port:</span>
<span id="t75" class="t " style="left:463.2px;top:453px;letter-spacing:0.13px;">Gateway:</span>
<span id="t76" class="t " style="left:463.2px;top:474px;letter-spacing:-0.19px;">Subnet Mask:</span>
<span id="t77" class="t " style="left:463.2px;top:495px;letter-spacing:-0.28px;">Polling/SMG IP Address:</span>
<span id="t78" class="t " style="left:463.2px;top:519px;letter-spacing:-0.34px;">Name/SMG Port:</span>
<span id="t79" class="t " style="left:463.2px;top:545px;letter-spacing:-0.02px;">Encryption:</span>
<span id="t80" class="t " style="left:611.4px;top:172px;letter-spacing:-0.02px;">Nothing Fitted</span>
<span id="t81" class="t " style="left:611.4px;top:198px;letter-spacing:-0.39px;">SmartCom</span>
<span id="t82" class="t " style="left:611.4px;top:224px;letter-spacing:-0.40px;">ComIP Module</span>
<span id="t83" class="t " style="left:611.4px;top:250px;letter-spacing:-0.63px;">GSM Module</span>
<span id="t84" class="t " style="left:611.4px;top:276px;letter-spacing:0.04px;">9600</span>
<span id="t85" class="t " style="left:611.4px;top:328px;letter-spacing:-0.30px;">AV Module</span>
<span id="t86" class="t " style="left:611.4px;top:471px;letter-spacing:0.18px;">255.255.255.0</span>
<span id="t87" class="t " style="left:612.0px;top:427px;letter-spacing:-0.27px;">10001</span>
</body>
</html>
